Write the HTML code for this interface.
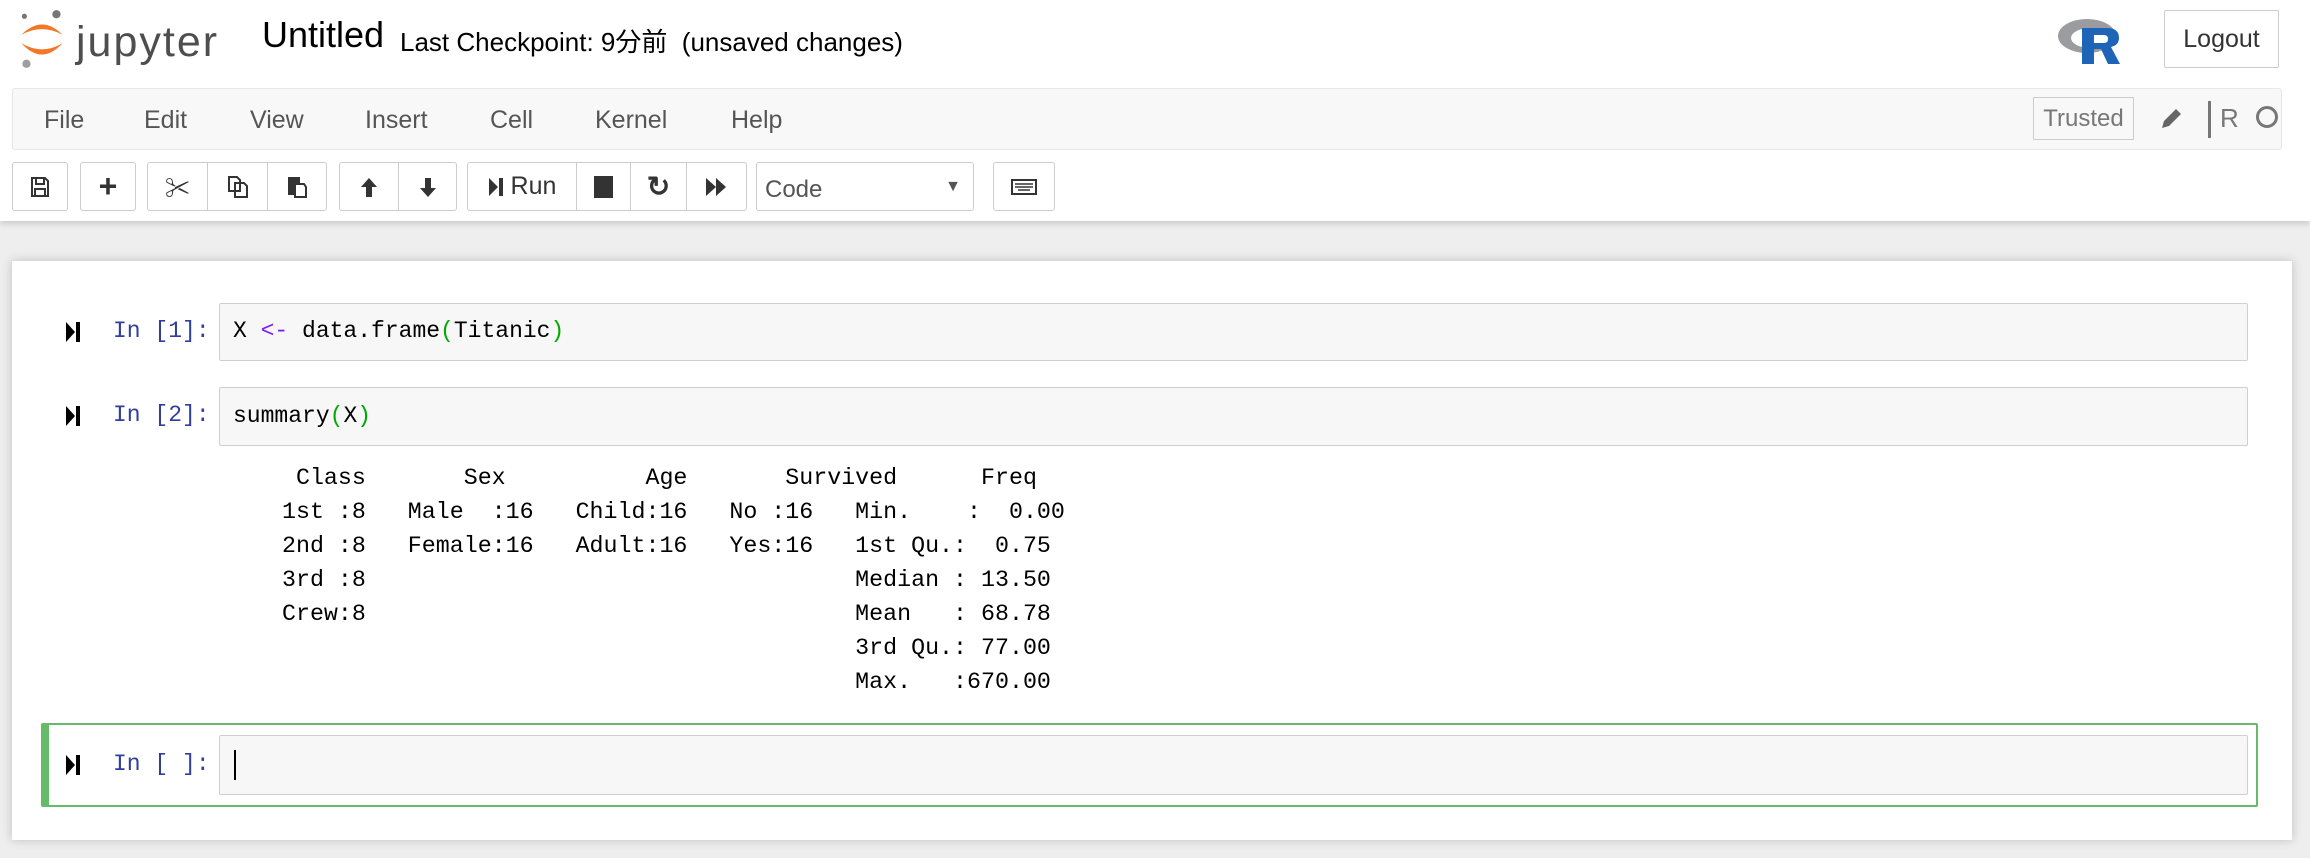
<!DOCTYPE html>
<html><head><meta charset="utf-8"><style>
*{box-sizing:border-box;margin:0;padding:0}
body{width:2310px;height:858px;background:#eee;font-family:"Liberation Sans","Noto Sans CJK JP",sans-serif;position:relative;overflow:hidden}
.abs{position:absolute}
#hdr{position:absolute;left:0;top:0;width:2310px;height:221px;background:#fff;box-shadow:0 3px 6px rgba(0,0,0,.15)}
.btn{position:absolute;top:162px;height:49px;border:1px solid #ccc;border-radius:3px;background:#fff;display:flex;align-items:center;justify-content:center;color:#333;font-size:25px}
.menu{position:absolute;top:106px;font-size:25px;color:#555}
.mono{font-family:"Liberation Mono","Noto Sans CJK JP",monospace;font-size:23px}
.prompt{position:absolute;color:#303F9F;font-family:"Liberation Mono",monospace;font-size:23px}
.inp{position:absolute;left:219px;width:2029px;background:#f7f7f7;border:1px solid #cfcfcf;border-radius:2px}
.arrow{position:absolute;left:66px;width:14px;height:20px}
pre{font-family:"Liberation Mono","Noto Sans CJK JP",monospace;font-size:23.3px;line-height:34px;color:#000}
</style></head><body>
<div id="hdr">
<svg class="abs" style="left:16px;top:8px" width="54" height="62" viewBox="0 0 50 60">
<circle cx="38" cy="6" r="4" fill="#767677"/><circle cx="7" cy="8" r="2.5" fill="#767677"/><circle cx="9" cy="54" r="4" fill="#9e9e9e"/>
<path d="M4 26 Q24 6 44 26 Q24 15 4 26Z" fill="#F37726"/>
<path d="M4 34 Q24 56 44 34 Q24 46 4 34Z" fill="#F37726"/>
</svg>
<div class="abs" style="left:76px;top:18px;font-size:43px;color:#4e4e4e;letter-spacing:2px">jupyter</div>
<div class="abs" style="left:262px;top:14px;font-size:36px;color:#000">Untitled</div>
<div class="abs" style="left:400px;top:22px;font-size:26px;color:#000">Last Checkpoint: 9分前 &nbsp;(unsaved changes)</div>
<svg class="abs" style="left:2057px;top:16px" width="66" height="50" viewBox="0 0 66 50">
<ellipse cx="30" cy="20" rx="29" ry="17" fill="#9b9ca0"/><ellipse cx="34" cy="22" rx="20" ry="10" fill="#fff"/>
<path d="M25 12 H50 Q62 12 62 22 Q62 29 54 31 L63 48 H51 L44 33 H37 V48 H25Z M37 19 V27 H47 Q51 27 51 23 Q51 19 47 19Z" fill="#1f65b7"/>
</svg>
<div class="abs" style="left:2164px;top:10px;width:115px;height:58px;border:1px solid #ccc;border-radius:2px;font-size:25px;color:#333;display:flex;align-items:center;justify-content:center">Logout</div>
<div class="abs" style="left:12px;top:88px;width:2270px;height:62px;background:#f8f8f8;border:1px solid #e7e7e7;border-radius:3px"></div>
<div class="menu" style="left:44px">File</div><div class="menu" style="left:144px">Edit</div><div class="menu" style="left:250px">View</div><div class="menu" style="left:365px">Insert</div><div class="menu" style="left:490px">Cell</div><div class="menu" style="left:595px">Kernel</div><div class="menu" style="left:731px">Help</div>
<div class="abs" style="left:2033px;top:97px;width:101px;height:43px;border:1px solid #ccc;font-size:24px;color:#777;display:flex;align-items:center;justify-content:center">Trusted</div>
<svg class="abs" style="left:2160px;top:106px" width="24" height="24" viewBox="0 0 24 24"><path d="M2 22 L4 15 L16 3 L21 8 L9 20Z" fill="#666"/></svg>
<div class="abs" style="left:2208px;top:101px;width:3px;height:37px;background:#777"></div>
<div class="abs" style="left:2220px;top:103px;font-size:26px;color:#777">R</div>
<div class="abs" style="left:2256px;top:106px;width:22px;height:22px;border:3px solid #777;border-radius:50%"></div>
<div class="btn" style="left:12px;width:56px"><svg width="20" height="22"><path d="M2 2H15L18 5V20H2Z M6 2V8H14V2 M5 13H15V20H5Z" fill="none" stroke="#333" stroke-width="2"/></svg></div>
<div class="btn" style="left:80px;width:56px;font-size:32px;font-weight:bold">+</div>
<div class="btn" style="left:147px;width:61px;border-radius:3px 0 0 3px">✂</div>
<div class="btn" style="left:207px;width:61px;border-radius:0"><svg width="22" height="24"><path d="M2 2H10L13 5V16H2Z M8 8H17L20 11V22H8Z" fill="#fff" stroke="#333" stroke-width="2"/></svg></div>
<div class="btn" style="left:267px;width:60px;border-radius:0 3px 3px 0"><svg width="22" height="24"><path d="M2 2H14V20H2Z" fill="#333"/><path d="M9 9H18L20 12V22H9Z" fill="#fff" stroke="#333" stroke-width="2"/></svg></div>
<div class="btn" style="left:339px;width:60px;border-radius:3px 0 0 3px"><svg width="20" height="22"><path d="M10 2L2 11H7V21H13V11H18Z" fill="#333"/></svg></div>
<div class="btn" style="left:398px;width:59px;border-radius:0 3px 3px 0"><svg width="20" height="22"><path d="M10 21L2 12H7V2H13V12H18Z" fill="#333"/></svg></div>
<div class="btn" style="left:467px;width:110px;border-radius:3px 0 0 3px"><svg width="16" height="22"><path d="M1 2L10 11L1 20Z M11 2H15V20H11Z" fill="#333"/></svg>&nbsp;Run</div>
<div class="btn" style="left:576px;width:55px;border-radius:0"><div style="width:19px;height:22px;background:#333"></div></div>
<div class="btn" style="left:630px;width:57px;border-radius:0;font-weight:bold;font-size:28px">↻</div>
<div class="btn" style="left:686px;width:61px;border-radius:0 3px 3px 0"><svg width="24" height="22"><path d="M1 2L11 11L1 20Z M11 2L21 11L11 20Z" fill="#333"/></svg></div>
<div class="btn" style="left:756px;width:218px;justify-content:space-between;padding:0 12px 0 8px;font-size:24px;color:#555"><span style="margin-top:6px">Code</span><span style="font-size:16px">▼</span></div>
<div class="btn" style="left:993px;width:62px"><svg width="26" height="16"><rect x="1" y="1" width="24" height="14" fill="none" stroke="#333" stroke-width="2"/><path d="M4 5H22M4 8H22M7 11H19" stroke="#333" stroke-width="1.5"/></svg></div>
</div>
<div class="abs" style="left:12px;top:261px;width:2280px;height:579px;background:#fff;box-shadow:0 0 10px rgba(0,0,0,.2)"></div>
<svg class="arrow" style="top:322px"><path d="M0 0L9 10L0 20Z M10 0H14V20H10Z" fill="#000"/></svg>
<div class="prompt" style="left:113px;top:318px">In [1]:</div>
<div class="inp" style="top:303px;height:58px"><div class="mono" style="position:absolute;left:13px;top:14px">X <span style="color:#7d1be7">&lt;-</span> data.frame<span style="color:#0a0">(</span>Titanic<span style="color:#0a0">)</span></div></div>
<svg class="arrow" style="top:406px"><path d="M0 0L9 10L0 20Z M10 0H14V20H10Z" fill="#000"/></svg>
<div class="prompt" style="left:113px;top:402px">In [2]:</div>
<div class="inp" style="top:387px;height:59px"><div class="mono" style="position:absolute;left:13px;top:15px">summary<span style="color:#0a0">(</span>X<span style="color:#0a0">)</span></div></div>
<pre class="abs" style="left:268px;top:461px">  Class       Sex          Age       Survived      Freq
 1st :8   Male  :16   Child:16   No :16   Min.    :  0.00
 2nd :8   Female:16   Adult:16   Yes:16   1st Qu.:  0.75
 3rd :8                                   Median : 13.50
 Crew:8                                   Mean   : 68.78
                                          3rd Qu.: 77.00
                                          Max.   :670.00</pre>
<div class="abs" style="left:41px;top:723px;width:2217px;height:84px;border:2px solid #66BB6A;border-left:8px solid #66BB6A;border-radius:2px"></div>
<svg class="arrow" style="top:755px"><path d="M0 0L9 10L0 20Z M10 0H14V20H10Z" fill="#000"/></svg>
<div class="prompt" style="left:113px;top:751px">In [ ]:</div>
<div class="inp" style="top:735px;height:60px"><div style="position:absolute;left:14px;top:14px;width:2px;height:30px;background:#000"></div></div>
</body></html>
